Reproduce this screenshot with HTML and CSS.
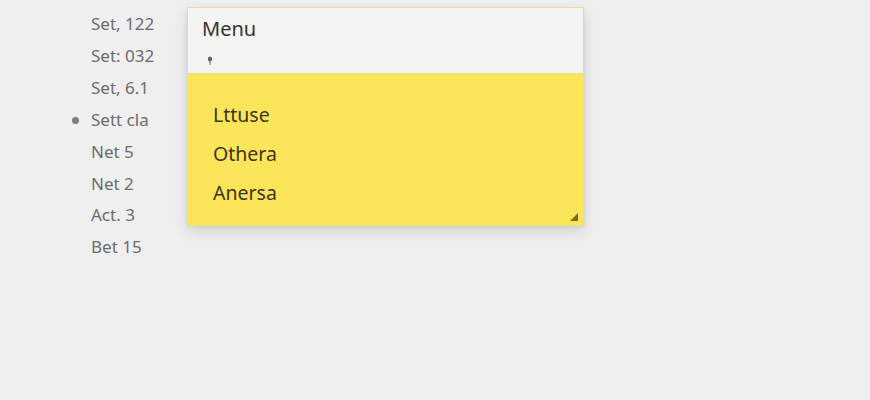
FILE: index.html
```html
<!DOCTYPE html>
<html>
<head>
<meta charset="utf-8">
<link rel="stylesheet" href="styles.css">
</head>
<body>
<div class="page">
  <ul class="sets">
    <li>Set, 122</li>
    <li>Set: 032</li>
    <li>Set, 6.1</li>
    <li class="active">Sett cla</li>
    <li>Net 5</li>
    <li>Net 2</li>
    <li>Act. 3</li>
    <li>Bet 15</li>
  </ul>
  <div class="panel">
    <div class="panel-head">
      <div class="title">Menu</div>
      <svg class="pin" width="6" height="10" viewBox="0 0 6 10"><ellipse cx="3" cy="3" rx="2.2" ry="2.6" fill="#666"/><rect x="2.4" y="5" width="1.2" height="4" fill="#777"/></svg>
    </div>
    <ul class="items">
      <li>Lttuse</li>
      <li>Othera</li>
      <li>Anersa</li>
    </ul>
    <svg class="grip" width="8" height="8" viewBox="0 0 8 8"><path d="M8 0 L8 8 L0 8 Z" fill="#7a6a22"/></svg>
  </div>
</div>
</body>
</html>
```
FILE: styles.css
```css
html, body {
  margin: 0;
  padding: 0;
  background: #efefef;
  font-family: "Noto Sans", "Open Sans", sans-serif;
}
.page {
  display: flex;
  align-items: flex-start;
  padding: 7px 0 0 0;
  height: 393px;
}
.sets {
  list-style: none;
  margin: 1px 0 0 0;
  padding: 0 0 0 91px;
  width: 96px;
}
.sets li {
  font-size: 17px;
  line-height: 31.9px;
  color: #6c6c6c;
  position: relative;
}
.sets li.active::before {
  content: "";
  position: absolute;
  left: -19px;
  top: 13px;
  width: 7px;
  height: 7px;
  border-radius: 50%;
  background: #7d7d7d;
}
.panel {
  position: relative;
  width: 395px;
  height: 217px;
  border: 1px solid #eedc90;
  background: #fde55a;
  box-shadow: 0 6px 14px rgba(0,0,0,0.12), 0 1px 4px rgba(0,0,0,0.06);
  display: flex;
  flex-direction: column;
}
.panel-head {
  background: #f4f4f2;
  height: 66px;
  border-bottom: 1px solid #f0dc80;
  padding: 7px 0 0 14px;
  box-sizing: border-box;
  display: flex;
  flex-direction: column;
}
.title {
  font-size: 20px;
  line-height: 28px;
  color: #333;
}
.pin {
  margin: 13px 0 0 5px;
}
.items {
  list-style: none;
  margin: 0;
  padding: 21px 0 0 25px;
}
.items li {
  font-size: 19.5px;
  line-height: 39px;
  color: #3b3619;
}
.grip {
  position: absolute;
  right: 5px;
  bottom: 4px;
}
```
